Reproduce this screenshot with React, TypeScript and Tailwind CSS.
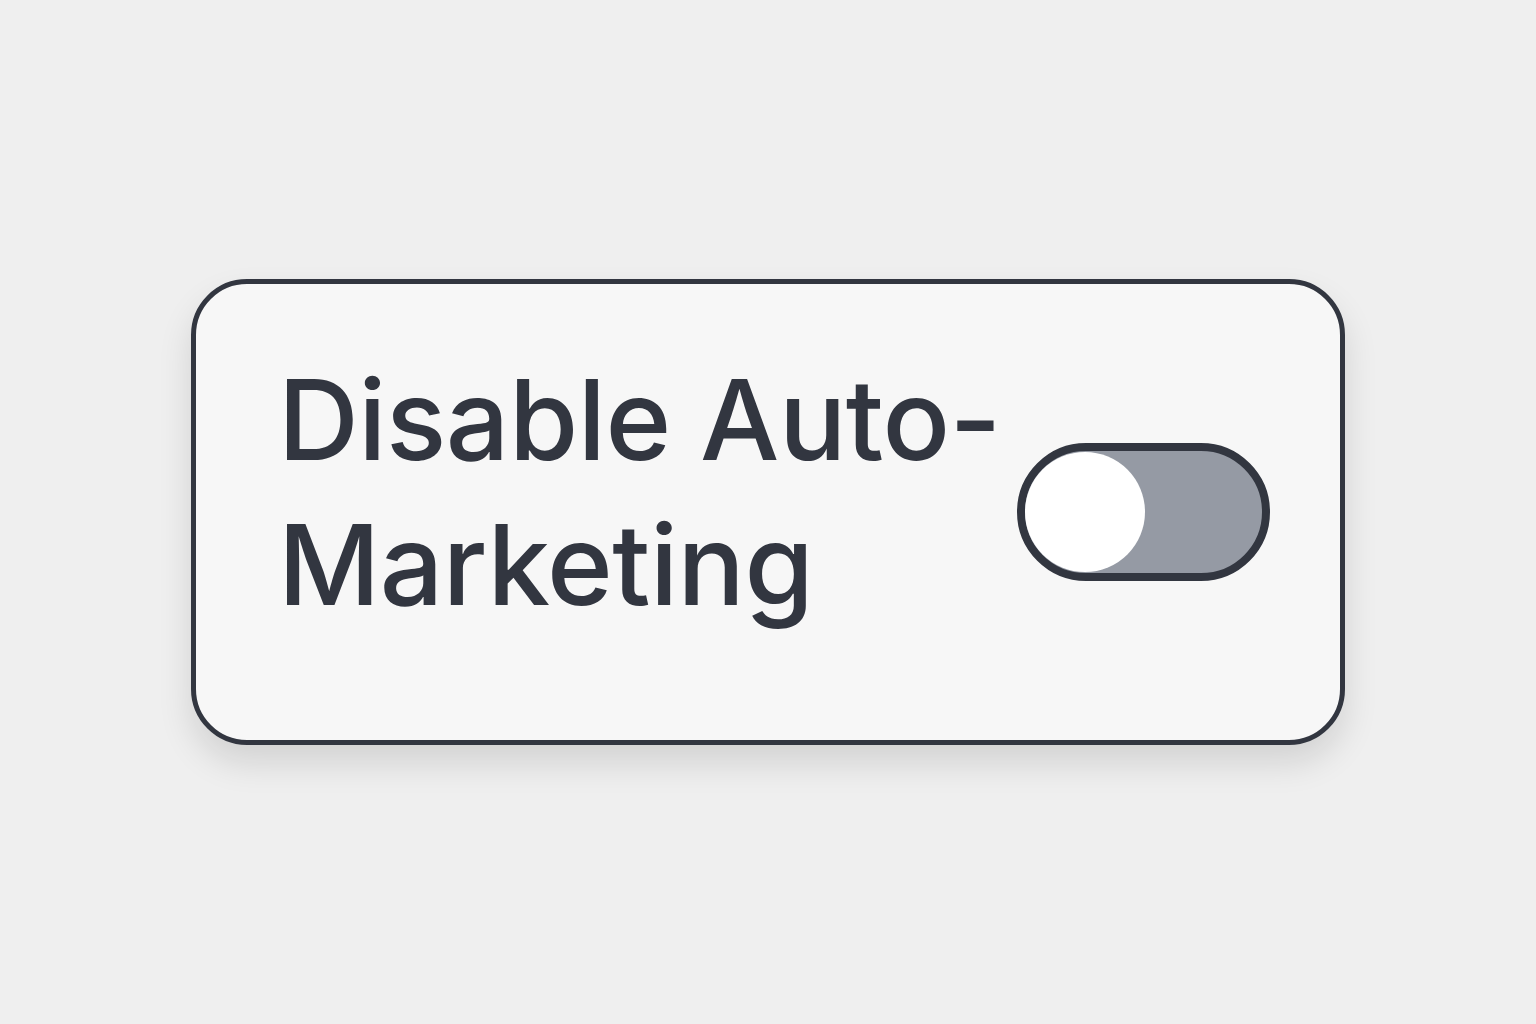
import { useState } from 'react';

export default function App() {
  const [enabled, setEnabled] = useState(false);

  return (
    <div className="flex h-[1024px] w-full items-center justify-center bg-[#efefef] font-['Inter',sans-serif]">
      <div className="flex h-[466px] w-[1154px] items-center justify-between rounded-[56px] border-[5px] border-[#323640] bg-[#f7f7f7] pl-[82px] pr-[70px] shadow-[0_18px_34px_rgba(0,0,0,0.12)]">
        <h1 className="whitespace-nowrap pb-[40px] text-[112px] font-medium leading-[145px] tracking-[-0.5px] text-[#323640]">
          Disable Auto-
          <br />
          Marketing
        </h1>
        <button
          onClick={() => setEnabled(!enabled)}
          className="flex h-[138px] w-[253px] items-center rounded-full border-[8px] border-[#323640] bg-[#959aa4] p-0"
        >
          <span className="block h-[120px] w-[120px] rounded-full bg-white" />
        </button>
      </div>
    </div>
  );
}
